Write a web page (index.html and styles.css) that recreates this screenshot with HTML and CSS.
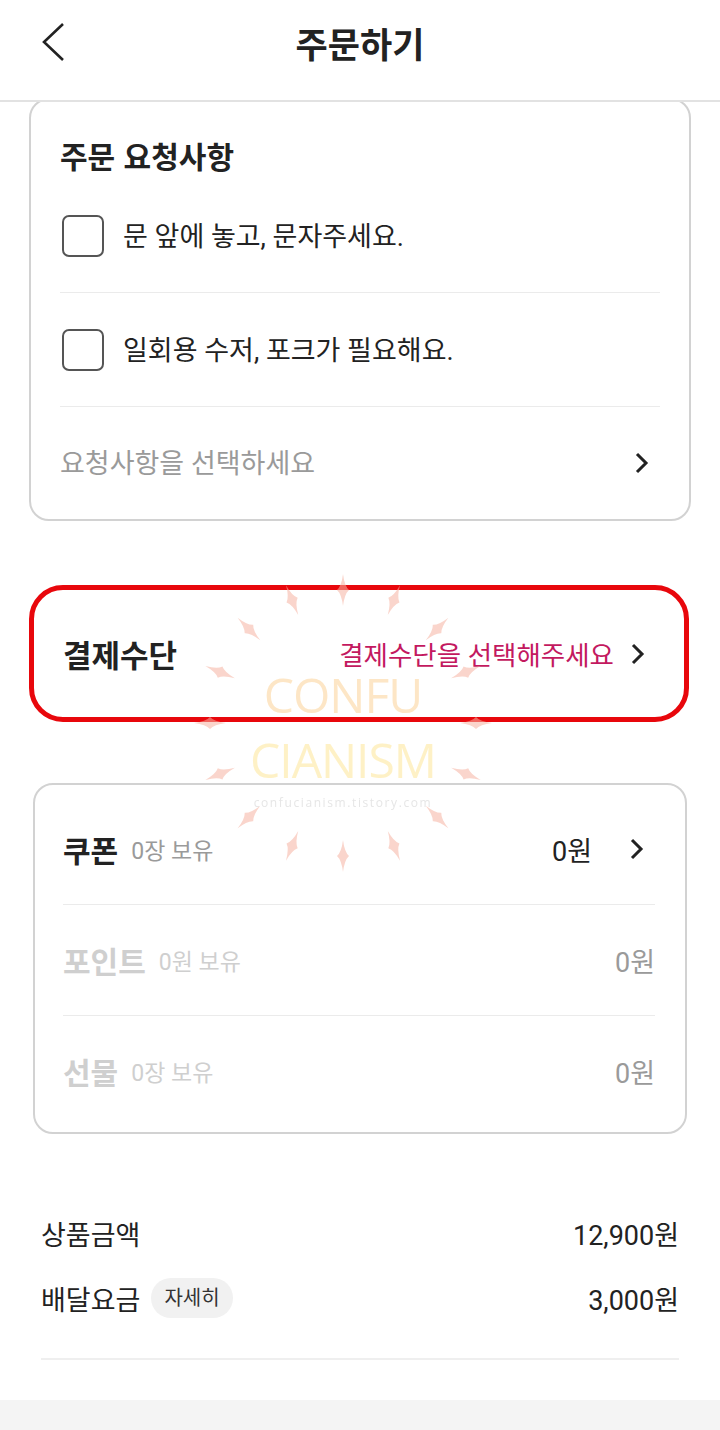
FILE: index.html
```html
<!DOCTYPE html>
<html lang="ko">

<head>
    <meta charset="UTF-8">
    <meta name="viewport" content="width=device-width, initial-scale=1.0">
    <title>주문하기</title>
    <link rel="stylesheet" href="styles.css">
</head>

<body>
    <div class="page">
        <header class="header">
            <svg class="back" width="24" height="40" viewBox="0 0 24 40">
                <path d="M22 2 L3 20 L22 38" fill="none" stroke="#222" stroke-width="2.6" />
            </svg>
            <h1>주문하기</h1>
        </header>

        <section class="card request">
            <h2 class="card-title">주문 요청사항</h2>
            <div class="req-row">
                <span class="checkbox"></span>
                <span class="req-text">문 앞에 놓고, 문자주세요.</span>
            </div>
            <div class="req-row">
                <span class="checkbox"></span>
                <span class="req-text">일회용 수저, 포크가 필요해요.</span>
            </div>
            <div class="req-row last">
                <span class="placeholder">요청사항을 선택하세요</span>
                <svg class="chev" width="16" height="24" viewBox="0 0 16 24">
                    <path d="M3 3 L12 12 L3 21" fill="none" stroke="#222" stroke-width="3" />
                </svg>
            </div>
        </section>

        <section class="payment">
            <span class="label">결제수단</span>
            <span class="pay-select">결제수단을 선택해주세요</span>
            <svg class="chev" width="16" height="24" viewBox="0 0 16 24">
                <path d="M3 3 L12 12 L3 21" fill="none" stroke="#222" stroke-width="3" />
            </svg>
        </section>

        <section class="card benefits">
            <div class="benefit-row">
                <span class="label">쿠폰</span>
                <span class="owned">0장 보유</span>
                <span class="amount">0원</span>
                <svg class="chev coupon-chev" width="16" height="24" viewBox="0 0 16 24">
                    <path d="M3 3 L12 12 L3 21" fill="none" stroke="#222" stroke-width="3" />
                </svg>
            </div>
            <div class="benefit-row disabled">
                <span class="label">포인트</span>
                <span class="owned">0원 보유</span>
                <span class="amount">0원</span>
            </div>
            <div class="benefit-row disabled last">
                <span class="label">선물</span>
                <span class="owned">0장 보유</span>
                <span class="amount">0원</span>
            </div>
        </section>

        <section class="summary">
            <div class="sum-row">
                <span>상품금액</span>
                <span class="price">12,900원</span>
            </div>
            <div class="sum-row">
                <span class="fee">배달요금<span class="pill">자세히</span></span>
                <span class="price">3,000원</span>
            </div>
        </section>

        <div class="footer-band"></div>

        <!-- blog watermark laid over the screenshot -->
        <div class="watermark">
            <svg class="rays" width="320" height="320" viewBox="-160 -160 320 320">
                <defs>
                    <path id="ray" d="M0 -16 Q1.5 -4 6 0 Q1.5 4 0 16 Q-1.5 4 -6 0 Q-1.5 -4 0 -16Z" />
                </defs>
                <g fill="#f6b3a2" opacity="0.55">
                    <use href="#ray" transform="rotate(0) translate(0 -133)" />
                    <use href="#ray" transform="rotate(22.5) translate(0 -133)" />
                    <use href="#ray" transform="rotate(45) translate(0 -133)" />
                    <use href="#ray" transform="rotate(67.5) translate(0 -133)" />
                    <use href="#ray" transform="rotate(90) translate(0 -133)" />
                    <use href="#ray" transform="rotate(112.5) translate(0 -133)" />
                    <use href="#ray" transform="rotate(135) translate(0 -133)" />
                    <use href="#ray" transform="rotate(157.5) translate(0 -133)" />
                    <use href="#ray" transform="rotate(180) translate(0 -133)" />
                    <use href="#ray" transform="rotate(202.5) translate(0 -133)" />
                    <use href="#ray" transform="rotate(225) translate(0 -133)" />
                    <use href="#ray" transform="rotate(247.5) translate(0 -133)" />
                    <use href="#ray" transform="rotate(270) translate(0 -133)" />
                    <use href="#ray" transform="rotate(292.5) translate(0 -133)" />
                    <use href="#ray" transform="rotate(315) translate(0 -133)" />
                    <use href="#ray" transform="rotate(337.5) translate(0 -133)" />
                </g>
            </svg>
            <div class="wm-text">
                <div class="wm-line one">CONFU</div>
                <div class="wm-line two">CIANISM</div>
                <div class="wm-url">confucianism.tistory.com</div>
            </div>
        </div>
    </div>
</body>

</html>
```

FILE: styles.css
```css
body {
    margin: 0;
    background: #fff;
    font-family: Roboto, "Noto Sans CJK KR", sans-serif;
    color: #222;
}

.page {
    position: relative;
    width: 720px;
    height: 1430px;
    overflow: hidden;
}

.header {
    position: relative;
    z-index: 1;
    height: 100px;
    border-bottom: 2px solid #e2e2e2;
    background: #fff;
    display: flex;
    justify-content: center;
    align-items: center;
}

.header h1 {
    margin: 0 0 14px;
    font-size: 35px;
    font-weight: 700;
    line-height: 44px;
    font-family: "Noto Sans CJK KR", sans-serif;
}

.back {
    position: absolute;
    left: 41px;
    top: 22px;
}

.card {
    border: 2px solid #d2d2d2;
    border-radius: 20px;
    background: #fff;
}

.request {
    margin: -4px 29px 0;
    padding: 31px 29px 0;
}

.card-title {
    margin: 0;
    font-size: 30px;
    font-weight: 700;
    line-height: 48px;
    font-family: "Noto Sans CJK KR", sans-serif;
}

.req-row {
    height: 113px;
    display: flex;
    align-items: center;
    border-bottom: 1px solid #ebebeb;
    font-size: 27px;
}

.req-row.last {
    height: 112px;
    border-bottom: none;
    justify-content: space-between;
}

.checkbox {
    width: 38px;
    height: 38px;
    margin-left: 2px;
    border: 2.5px solid #555;
    border-radius: 7px;
    flex-shrink: 0;
}

.req-text {
    margin-left: 19px;
    margin-bottom: 2px;
}

.placeholder {
    color: #9a9a9a;
    margin-bottom: 4px;
}

.chev {
    margin-right: 10px;
}

.payment {
    margin: 64px 31px 0 29px;
    height: 127px;
    border: 5px solid #e8070c;
    border-radius: 34px;
    display: flex;
    align-items: center;
    padding: 0 38px 0 29px;
}

.label {
    font-size: 30px;
    font-weight: 700;
    font-family: "Noto Sans CJK KR", sans-serif;
}

.payment .label {
    margin-right: auto;
    font-size: 31px;
}

.pay-select {
    font-size: 26.5px;
    color: #c3195f;
    margin-right: 16px;
}

.payment .chev {
    margin-right: 0;
}

.benefits {
    margin: 61px 33px 0;
    padding: 9px 30px 6px 28px;
}

.benefit-row {
    height: 110px;
    display: flex;
    align-items: center;
    border-bottom: 1px solid #ebebeb;
}

.benefit-row.last {
    border-bottom: none;
}

.owned {
    margin-left: 13px;
    font-size: 23px;
    color: #9a9a9a;
}

.amount {
    margin-left: auto;
    font-size: 27px;
}

.coupon-chev {
    margin: 0 10px 0 37px;
}

.disabled .label,
.disabled .owned {
    color: #cfcfcf;
}

.disabled .amount {
    color: #9a9a9a;
}

.summary {
    margin: 77px 41px 0;
    padding-bottom: 38px;
    border-bottom: 2px solid #efefef;
    display: flex;
    flex-direction: column;
    gap: 21px;
}

.sum-row {
    height: 44px;
    display: flex;
    align-items: center;
    justify-content: space-between;
    font-size: 27px;
}

.fee {
    display: flex;
    align-items: center;
}

.pill {
    margin-left: 11px;
    padding: 0 13px;
    height: 40px;
    line-height: 40px;
    border-radius: 20px;
    background: #f1f1f1;
    font-size: 20px;
    color: #333;
}

.footer-band {
    position: absolute;
    left: 0;
    right: 0;
    top: 1400px;
    height: 30px;
    background: #f4f4f4;
}

.watermark {
    position: absolute;
    left: 183px;
    top: 563px;
    width: 320px;
    height: 320px;
    pointer-events: none;
}

.rays {
    position: absolute;
    left: 0;
    top: 0;
}

.wm-text {
    position: absolute;
    left: 0;
    right: 0;
    top: 114px;
    text-align: center;
    font-family: "Open Sans", sans-serif;
}

.wm-line {
    font-size: 48px;
    line-height: 36px;
    letter-spacing: -1px;
}

.wm-line.one {
    color: rgba(252, 214, 160, 0.6);
}

.wm-line.two {
    margin-top: 29px;
    color: rgba(253, 232, 160, 0.6);
}

.wm-url {
    margin-top: 17px;
    font-size: 12px;
    line-height: 16px;
    letter-spacing: 1.6px;
    color: #e6e6e6;
}
```
